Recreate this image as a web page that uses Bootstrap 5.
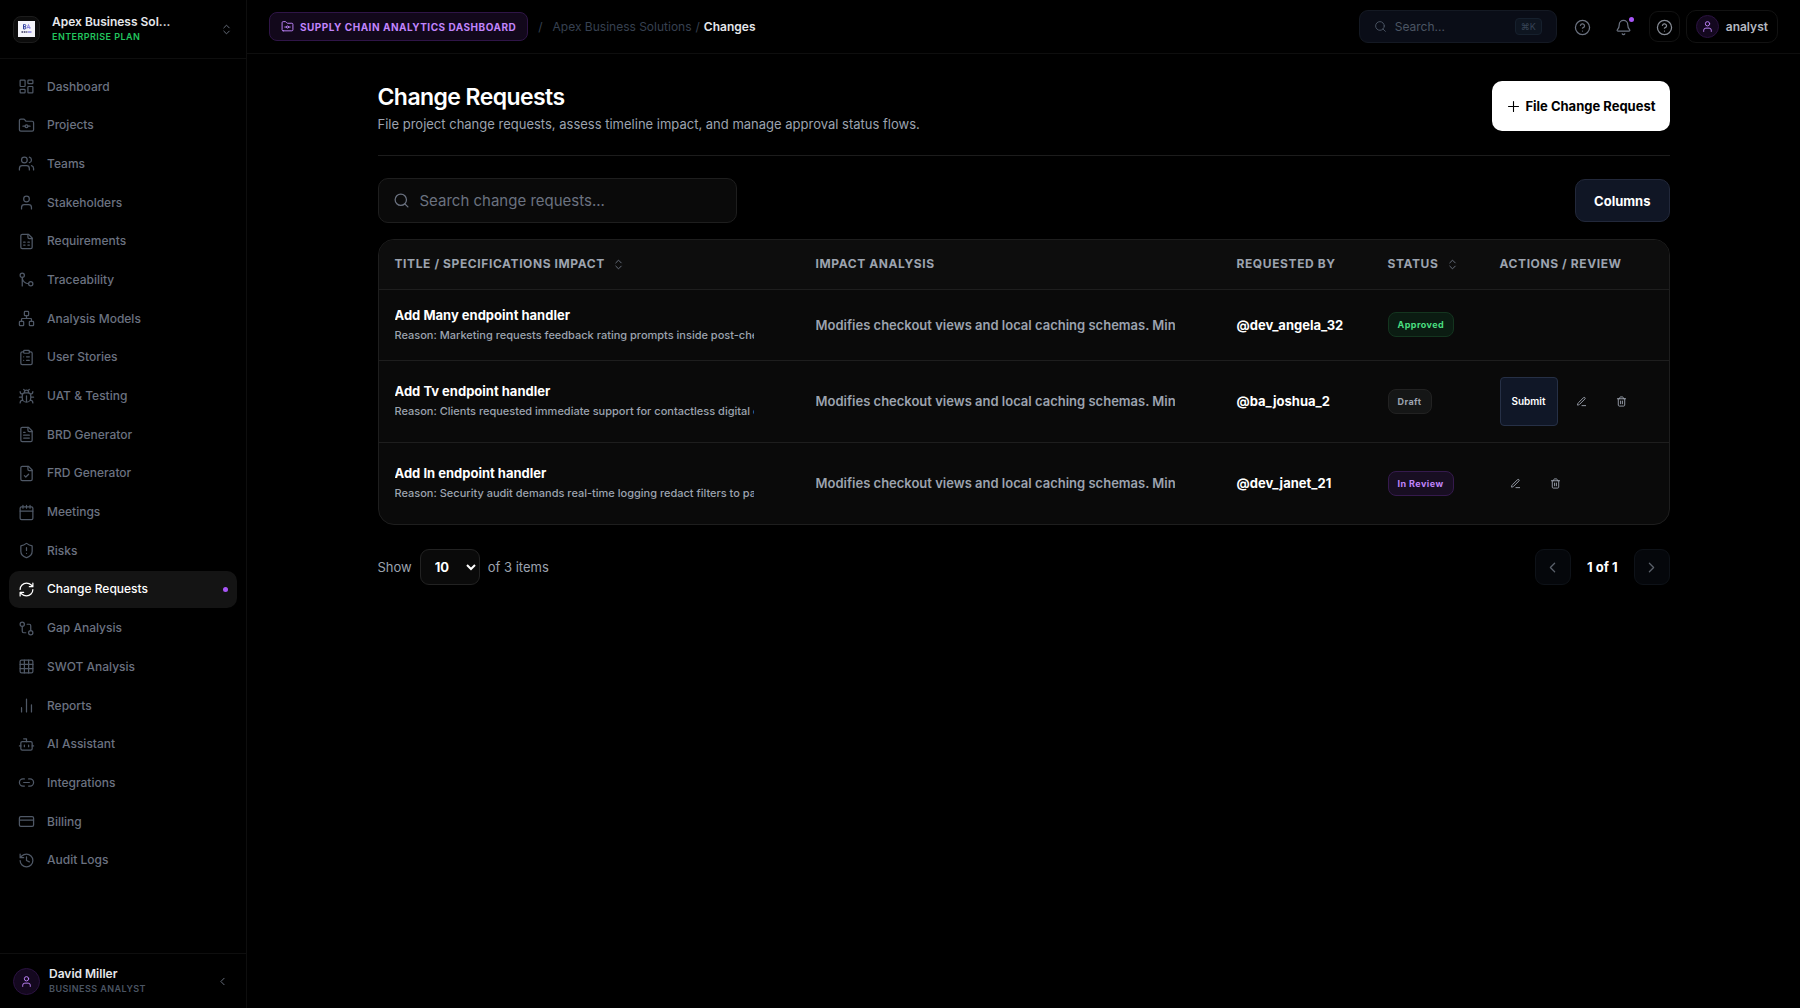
<!DOCTYPE html>
<html lang="en">
<head>
<meta charset="utf-8">
<meta name="viewport" content="width=device-width, initial-scale=1">
<title>Change Requests</title>
<link href="https://cdn.jsdelivr.net/npm/bootstrap@5.3.0/dist/css/bootstrap.min.css" rel="stylesheet">
<style>
  body { background: #000; color: #fff; font-family: Inter, "Liberation Sans", sans-serif; font-size: 13px; line-height: 20px; }
  button, input, select { font-family: inherit; }
  a { text-decoration: none; }
  .ico { fill: none; stroke: currentColor; stroke-width: 1.75; stroke-linecap: round; stroke-linejoin: round; flex: none; width: 17px; height: 17px; }
  .ico-sm { width: 13px; height: 13px; }
  .ico-md { width: 15px; height: 15px; }
  .ico-xs { width: 11px; height: 11px; stroke-width: 2; }

  /* Sidebar */
  .side { width: 247px; border-right: 1px solid #0e0e0e; }
  .side-top { height: 59px; padding: 0 13px; border-bottom: 1px solid #0e0e0e; }
  .brand-tile { width: 27px; height: 27px; border-radius: 8px; background: #0c0c0c; border: 1px solid #1c1c1c; }
  .tiny-caps { font-size: 9px; line-height: 14px; font-weight: 600; letter-spacing: .05em; text-transform: uppercase; }
  .c-green { color: #22c55e; }
  .c-dim { color: #4b5563; }
  .c-soft { color: #6b7280; }
  .c-muted { color: #9ca3af; }
  .name-line { font-size: 12px; line-height: 16px; font-weight: 600; color: #e5e7eb; }
  .menu { padding: 9px 9px 74px; }
  .menu a { display: flex; align-items: center; gap: 12px; height: 37px; padding: 0 9px; border-radius: 10px; font-size: 12px; font-weight: 500; color: #6b7280; }
  .menu a .ico { color: #4f5866; }
  .menu a.active, .menu a.active .ico { color: #fff; }
  .menu a.active { background: #141414; }
  .menu-dot { width: 5px; height: 5px; border-radius: 50%; background: #a855f7; }
  .side-user { height: 55px; padding: 0 13px; border-top: 1px solid #0e0e0e; gap: 9px; }
  .ava { width: 27px; height: 27px; border-radius: 50%; background: #14081f; border: 1px solid #2a1240; color: #c084fc; }
  .ava-sm { width: 23px; height: 23px; }

  /* Top bar */
  .top { height: 54px; padding: 0 22px; border-bottom: 1px solid #0e0e0e; }
  .proj { height: 29px; padding: 0 11px; gap: 6px; border-radius: 8px; border: 1px solid #2f1547; background: #12081b; color: #c084fc; font-size: 10px; font-weight: 700; letter-spacing: .05em; }
  .crumb-text { font-size: 12px; color: #374151; }
  .crumb-text .first-sep { margin: 0 10px; }
  .crumb-text .now { color: #e5e7eb; font-weight: 600; }
  .top-tools { gap: 6px; }
  .quick { width: 198px; height: 33px; padding: 0 14px; border-radius: 9px; background: #0a0d17; border: 1px solid #141923; color: #4b5563; }
  .quick input { font-size: 12px; color: inherit; }
  .quick input::placeholder { color: #4b5563; opacity: 1; }
  .keycap { font-size: 9px; line-height: 15px; padding: 0 5px; border-radius: 4px; border: 1px solid #16202d; background: #0e1520; color: #364355; }
  .iconbtn { width: 31px; height: 31px; margin-left: 4px; border: 1px solid transparent; border-radius: 9px; background: none; color: #6b7280; padding: 0; }
  .ringed { border-color: #121212; color: #868b95; }
  .bell-dot { width: 5px; height: 5px; border-radius: 50%; background: #a855f7; top: 5px; right: 4px; }
  .who { height: 33px; padding: 0 9px; border: 1px solid #121212; border-radius: 10px; background: none; color: #b4b8c0; font-size: 12px; font-weight: 600; gap: 7px; }

  /* Content */
  .content { max-width: 1340px; padding: 27px 24px; }
  .head { padding-bottom: 20px; border-bottom: 1px solid #1c1c1c; }
  .head h1 { font-size: 23px; line-height: 32px; font-weight: 600; letter-spacing: -.025em; }
  .head p { font-size: 13px; line-height: 22px; }
  .file-btn { height: 50px; padding: 0 14px; border: 0; border-radius: 10px; background: #fff; color: #000; font-size: 13px; font-weight: 700; gap: 4px; }
  .tools { margin: 22px 0 16px; }
  .find { width: 359px; height: 45px; padding: 0 14px; border: 1px solid #1e1e1e; border-radius: 10px; background: #0a0a0a; color: #6b7280; gap: 10px; }
  .find input { font-size: 15px; color: #fff; }
  .find input::placeholder { color: #6b7280; opacity: 1; }
  .bare { background: none; border: 0; outline: 0; padding: 0; min-width: 0; flex: 1; }
  .cols-btn { height: 43px; padding: 0 18px; border: 1px solid #22283a; border-radius: 10px; background: #101625; color: #fff; font-size: 13px; font-weight: 700; }

  .grid-box { border: 1px solid #1e1e1e; border-radius: 16px; background: #0a0a0a; overflow: hidden; }
  .grid-box table { width: 100%; table-layout: fixed; border-collapse: collapse; }
  .grid-box th { height: 49px; padding: 0 16px; background: #0d0d0d; color: #9ca3af; font-size: 12px; font-weight: 700; letter-spacing: .05em; white-space: nowrap; }
  .grid-box td { padding: 16px; vertical-align: middle; border-top: 1px solid #1e1e1e; }
  .clip { width: 359px; max-width: 100%; overflow: hidden; white-space: nowrap; }
  .t-main { font-size: 13px; line-height: 18px; font-weight: 700; color: #fff; }
  .t-sub { margin-top: 3px; font-size: 11px; line-height: 17px; font-weight: 500; color: #9ca3af; }
  .t-impact { font-weight: 600; color: #9ca3af; }
  .pill { display: inline-block; padding: 3px 9px; border: 1px solid; border-radius: 8px; font-size: 9px; line-height: 17px; font-weight: 700; letter-spacing: .05em; }
  .pill-ok { color: #4ade80; background: #0b1c12; border-color: #14351f; }
  .pill-draft { color: #9ca3af; background: #151616; border-color: #222; }
  .pill-rev { color: #c084fc; background: #180e22; border-color: #351a4d; }
  .submit-btn { width: 58px; height: 49px; padding: 0; border: 1px solid #263046; border-radius: 4px; background: #101727; color: #fff; font-size: 10px; font-weight: 600; }
  .act { width: 32px; height: 49px; padding: 0; border: 0; background: none; color: #9ca3af; }

  .pager { margin-top: 24px; }
  .pick { width: 60px; height: 36px; padding: 0 0 0 10px; border: 1px solid #222; border-radius: 9px; background: #0a0a0a; color: #fff; font-size: 13px; font-weight: 700; }
  .step { width: 36px; height: 36px; padding: 0; border: 1px solid #0e1218; border-radius: 9px; background: #05070b; color: #5b616b; }
</style>
</head>
<body>
<svg width="0" height="0" class="position-absolute" aria-hidden="true">
  <symbol id="dash" viewBox="0 0 24 24"><rect x="3" y="3" width="7" height="9" rx="1"/><rect x="14" y="3" width="7" height="5" rx="1"/><rect x="14" y="12" width="7" height="9" rx="1"/><rect x="3" y="16" width="7" height="5" rx="1"/></symbol>
  <symbol id="folder" viewBox="0 0 24 24"><path d="M4 20h16a2 2 0 0 0 2-2V8a2 2 0 0 0-2-2h-7.93a2 2 0 0 1-1.66-.9l-.82-1.2A2 2 0 0 0 7.93 3H4a2 2 0 0 0-2 2v13c0 1.1.9 2 2 2Z"/><circle cx="12" cy="13" r="2"/><path d="M14 13h3M7 13h3"/></symbol>
  <symbol id="users" viewBox="0 0 24 24"><path d="M16 21v-2a4 4 0 0 0-4-4H6a4 4 0 0 0-4 4v2"/><circle cx="9" cy="7" r="4"/><path d="M22 21v-2a4 4 0 0 0-3-3.87M16 3.13a4 4 0 0 1 0 7.75"/></symbol>
  <symbol id="user" viewBox="0 0 24 24"><path d="M19 21v-2a4 4 0 0 0-4-4H9a4 4 0 0 0-4 4v2"/><circle cx="12" cy="7" r="4"/></symbol>
  <symbol id="sheet" viewBox="0 0 24 24"><path d="M15 2H6a2 2 0 0 0-2 2v16a2 2 0 0 0 2 2h12a2 2 0 0 0 2-2V7Z"/><path d="M14 2v4a2 2 0 0 0 2 2h4M8 13h2M14 13h2M8 17h2M14 17h2"/></symbol>
  <symbol id="merge" viewBox="0 0 24 24"><circle cx="18" cy="18" r="3"/><circle cx="6" cy="6" r="3"/><path d="M6 21V9a9 9 0 0 0 9 9"/></symbol>
  <symbol id="net" viewBox="0 0 24 24"><rect x="16" y="16" width="6" height="6" rx="1"/><rect x="2" y="16" width="6" height="6" rx="1"/><rect x="9" y="2" width="6" height="6" rx="1"/><path d="M5 16v-3a1 1 0 0 1 1-1h12a1 1 0 0 1 1 1v3M12 12V8"/></symbol>
  <symbol id="clipb" viewBox="0 0 24 24"><rect x="8" y="2" width="8" height="4" rx="1"/><path d="M16 4h2a2 2 0 0 1 2 2v14a2 2 0 0 1-2 2H6a2 2 0 0 1-2-2V6a2 2 0 0 1 2-2h2M12 11h4M12 16h4M8 11h.01M8 16h.01"/></symbol>
  <symbol id="bug" viewBox="0 0 24 24"><path d="m8 2 1.88 1.88M14.12 3.88 16 2M9 7.13v-1a3.003 3.003 0 1 1 6 0v1M12 20c-3.3 0-6-2.7-6-6v-3a4 4 0 0 1 4-4h4a4 4 0 0 1 4 4v3c0 3.3-2.7 6-6 6M12 20v-9M6.53 9C4.6 8.8 3 7.1 3 5M6 13H2M3 21c0-2.1 1.7-3.9 3.8-4M20.97 5c0 2.1-1.6 3.8-3.5 4M22 13h-4M17.2 17c2.1.1 3.8 1.9 3.8 4"/></symbol>
  <symbol id="ftext" viewBox="0 0 24 24"><path d="M15 2H6a2 2 0 0 0-2 2v16a2 2 0 0 0 2 2h12a2 2 0 0 0 2-2V7Z"/><path d="M14 2v4a2 2 0 0 0 2 2h4M10 9H8M16 13H8M16 17H8"/></symbol>
  <symbol id="fcheck" viewBox="0 0 24 24"><path d="M15 2H6a2 2 0 0 0-2 2v16a2 2 0 0 0 2 2h12a2 2 0 0 0 2-2V7Z"/><path d="M14 2v4a2 2 0 0 0 2 2h4M9 15l2 2 4-4"/></symbol>
  <symbol id="cal" viewBox="0 0 24 24"><rect x="3" y="4" width="18" height="18" rx="2"/><path d="M7 2v4M12 2v4M17 2v4M3 10h18"/></symbol>
  <symbol id="shield" viewBox="0 0 24 24"><path d="M20 13c0 5-3.5 7.5-7.66 8.95a1 1 0 0 1-.67-.01C7.5 20.5 4 18 4 13V6a1 1 0 0 1 1-1c2 0 4.5-1.2 6.24-2.72a1.17 1.17 0 0 1 1.52 0C14.51 3.81 17 5 19 5a1 1 0 0 1 1 1zM12 8v4M12 16h.01"/></symbol>
  <symbol id="cycle" viewBox="0 0 24 24"><path d="M3 12a9 9 0 0 1 9-9 9.75 9.75 0 0 1 6.74 2.74L21 8M21 3v5h-5M21 12a9 9 0 0 1-9 9 9.75 9.75 0 0 1-6.74-2.74L3 16M8 16H3v5"/></symbol>
  <symbol id="gap" viewBox="0 0 24 24"><circle cx="18" cy="18" r="3"/><circle cx="6" cy="6" r="3"/><path d="M13 6h3a2 2 0 0 1 2 2v7M11 18H8a2 2 0 0 1-2-2V9"/></symbol>
  <symbol id="grid9" viewBox="0 0 24 24"><rect x="3" y="3" width="18" height="18" rx="2"/><path d="M3 9h18M3 15h18M9 3v18M15 3v18"/></symbol>
  <symbol id="bars" viewBox="0 0 24 24"><path d="M19 21V11M12 21V3M5 21v-6"/></symbol>
  <symbol id="bot" viewBox="0 0 24 24"><path d="M12 8V4H8"/><rect x="4" y="8" width="16" height="12" rx="2"/><path d="M2 14h2M20 14h2M15 13v2M9 13v2"/></symbol>
  <symbol id="chain" viewBox="0 0 24 24"><path d="M9 17H7A5 5 0 0 1 7 7h2M15 7h2a5 5 0 1 1 0 10h-2M8 12h8"/></symbol>
  <symbol id="pay" viewBox="0 0 24 24"><rect x="2" y="5" width="20" height="14" rx="2"/><path d="M2 10h20"/></symbol>
  <symbol id="hist" viewBox="0 0 24 24"><path d="M3 12a9 9 0 1 0 9-9 9.75 9.75 0 0 0-6.74 2.74L3 8M3 3v5h5M12 7v5l4 2"/></symbol>
  <symbol id="updown" viewBox="0 0 24 24"><path d="m7 15 5 5 5-5M7 9l5-5 5 5"/></symbol>
  <symbol id="left" viewBox="0 0 24 24"><path d="m15 18-6-6 6-6"/></symbol>
  <symbol id="right" viewBox="0 0 24 24"><path d="m9 18 6-6-6-6"/></symbol>
  <symbol id="lens" viewBox="0 0 24 24"><circle cx="11" cy="11" r="8"/><path d="m21 21-4.3-4.3"/></symbol>
  <symbol id="help" viewBox="0 0 24 24"><circle cx="12" cy="12" r="10"/><path d="M9.09 9a3 3 0 0 1 5.83 1c0 2-3 3-3 3M12 17h.01"/></symbol>
  <symbol id="bell" viewBox="0 0 24 24"><path d="M10.268 21a2 2 0 0 0 3.464 0M3.262 15.326A1 1 0 0 0 4 17h16a1 1 0 0 0 .74-1.673C19.41 13.956 18 12.499 18 8A6 6 0 0 0 6 8c0 4.499-1.411 5.956-2.738 7.326"/></symbol>
  <symbol id="plus" viewBox="0 0 24 24"><path d="M4 12h16M12 4v16"/></symbol>
  <symbol id="pen" viewBox="0 0 24 24"><path d="M13 21h8M16.376 3.622a1 1 0 0 1 3.002 3.002L7.368 18.635a2 2 0 0 1-.855.506l-2.872.838a.5.5 0 0 1-.62-.62l.838-2.872a2 2 0 0 1 .506-.854z"/></symbol>
  <symbol id="bin" viewBox="0 0 24 24"><path d="M3 6h18M19 6v14c0 1-1 2-2 2H7c-1 0-2-1-2-2V6M8 6V4c0-1 1-2 2-2h4c1 0 2 1 2 2v2M10 11v6M14 11v6"/></symbol>
</svg>

<div class="d-flex min-vh-100">
  <aside class="side d-flex flex-column flex-shrink-0">
    <div class="side-top d-flex align-items-center">
      <div class="brand-tile d-flex align-items-center justify-content-center">
        <svg width="17" height="16" viewBox="0 0 17 16" aria-hidden="true"><rect width="17" height="16" fill="#f4f4fa"/><path d="M5.500 3.500v4.500h1.500a1.200 1.200 0 0 0 0-2.300h-1.500M5.500 3.500h1.200a1.100 1.100 0 0 1 0 2.200" fill="none" stroke="#2f3f9e" stroke-width="1"/><path d="M9 7.500l1.500-4 1.500 4.500M9 6.500h3.500" fill="none" stroke="#8a84e0" stroke-width="1"/><path d="M3.500 11h1.800M6 11h1.500M8.200 11h1.200" stroke="#33335c" stroke-width="1.500"/><path d="M10 11h3.500" stroke="#8a84e0" stroke-width="1.500"/></svg>
      </div>
      <div class="ms-2 ps-1 flex-fill">
        <div class="name-line">Apex Business Sol...</div>
        <div class="tiny-caps c-green">Enterprise Plan</div>
      </div>
      <svg class="ico ico-sm c-soft"><use href="#updown"/></svg>
    </div>
    <nav class="menu flex-fill d-flex flex-column justify-content-between" aria-label="Main">
      <a href="#"><svg class="ico"><use href="#dash"/></svg>Dashboard</a>
      <a href="#"><svg class="ico"><use href="#folder"/></svg>Projects</a>
      <a href="#"><svg class="ico"><use href="#users"/></svg>Teams</a>
      <a href="#"><svg class="ico"><use href="#user"/></svg>Stakeholders</a>
      <a href="#"><svg class="ico"><use href="#sheet"/></svg>Requirements</a>
      <a href="#"><svg class="ico"><use href="#merge"/></svg>Traceability</a>
      <a href="#"><svg class="ico"><use href="#net"/></svg>Analysis Models</a>
      <a href="#"><svg class="ico"><use href="#clipb"/></svg>User Stories</a>
      <a href="#"><svg class="ico"><use href="#bug"/></svg>UAT &amp; Testing</a>
      <a href="#"><svg class="ico"><use href="#ftext"/></svg>BRD Generator</a>
      <a href="#"><svg class="ico"><use href="#fcheck"/></svg>FRD Generator</a>
      <a href="#"><svg class="ico"><use href="#cal"/></svg>Meetings</a>
      <a href="#"><svg class="ico"><use href="#shield"/></svg>Risks</a>
      <a href="#" class="active" aria-current="page"><svg class="ico"><use href="#cycle"/></svg>Change Requests<span class="menu-dot ms-auto"></span></a>
      <a href="#"><svg class="ico"><use href="#gap"/></svg>Gap Analysis</a>
      <a href="#"><svg class="ico"><use href="#grid9"/></svg>SWOT Analysis</a>
      <a href="#"><svg class="ico"><use href="#bars"/></svg>Reports</a>
      <a href="#"><svg class="ico"><use href="#bot"/></svg>AI Assistant</a>
      <a href="#"><svg class="ico"><use href="#chain"/></svg>Integrations</a>
      <a href="#"><svg class="ico"><use href="#pay"/></svg>Billing</a>
      <a href="#"><svg class="ico"><use href="#hist"/></svg>Audit Logs</a>
    </nav>
    <div class="side-user d-flex align-items-center">
      <div class="ava d-flex align-items-center justify-content-center"><svg class="ico ico-sm"><use href="#user"/></svg></div>
      <div class="flex-fill">
        <div class="name-line">David Miller</div>
        <div class="tiny-caps c-dim">Business Analyst</div>
      </div>
      <svg class="ico ico-sm c-soft me-1"><use href="#left"/></svg>
    </div>
  </aside>

  <div class="flex-fill d-flex flex-column">
    <header class="top d-flex align-items-center">
      <button type="button" class="proj d-flex align-items-center"><svg class="ico ico-sm"><use href="#folder"/></svg>SUPPLY CHAIN ANALYTICS DASHBOARD</button>
      <nav class="crumb-text d-flex align-items-center" aria-label="Breadcrumb">
        <span class="first-sep">/</span>
        <a href="#" class="text-reset">Apex Business Solutions</a>
        <span class="mx-1">/</span>
        <span class="now">Changes</span>
      </nav>
      <div class="top-tools ms-auto d-flex align-items-center">
        <label class="quick d-flex align-items-center gap-2">
          <svg class="ico ico-sm"><use href="#lens"/></svg>
          <input class="bare" type="search" placeholder="Search..." aria-label="Search">
          <span class="keycap">⌘K</span>
        </label>
        <button type="button" class="iconbtn" aria-label="Help"><svg class="ico"><use href="#help"/></svg></button>
        <button type="button" class="iconbtn position-relative" aria-label="Notifications"><svg class="ico"><use href="#bell"/></svg><span class="bell-dot position-absolute"></span></button>
        <button type="button" class="iconbtn ringed" aria-label="Guide"><svg class="ico"><use href="#help"/></svg></button>
        <button type="button" class="who d-flex align-items-center"><span class="ava ava-sm d-flex align-items-center justify-content-center"><svg class="ico ico-sm"><use href="#user"/></svg></span>analyst</button>
      </div>
    </header>

    <main class="content w-100 mx-auto">
      <div class="head d-flex justify-content-between align-items-start">
        <div>
          <h1 class="mb-0">Change Requests</h1>
          <p class="mb-0 c-muted">File project change requests, assess timeline impact, and manage approval status flows.</p>
        </div>
        <button type="button" class="file-btn d-flex align-items-center"><svg class="ico ico-md"><use href="#plus"/></svg>File Change Request</button>
      </div>

      <div class="tools d-flex justify-content-between align-items-center">
        <label class="find d-flex align-items-center">
          <svg class="ico"><use href="#lens"/></svg>
          <input class="bare" type="search" placeholder="Search change requests..." aria-label="Search change requests">
        </label>
        <button type="button" class="cols-btn">Columns</button>
      </div>

      <div class="grid-box">
        <table>
          <colgroup><col><col><col style="width:151px"><col style="width:112px"><col style="width:185px"></colgroup>
          <thead>
            <tr>
              <th scope="col">TITLE / SPECIFICATIONS IMPACT <svg class="ico ico-sm c-soft ms-1"><use href="#updown"/></svg></th>
              <th scope="col">IMPACT ANALYSIS</th>
              <th scope="col">REQUESTED BY</th>
              <th scope="col">STATUS <svg class="ico ico-sm c-soft ms-1"><use href="#updown"/></svg></th>
              <th scope="col">ACTIONS / REVIEW</th>
            </tr>
          </thead>
          <tbody>
            <tr>
              <td><div class="clip t-main">Add Many endpoint handler</div><div class="clip t-sub">Reason: Marketing requests feedback rating prompts inside post-checkout</div></td>
              <td><div class="clip t-impact">Modifies checkout views and local caching schemas. Minor</div></td>
              <td class="t-main">@dev_angela_32</td>
              <td><span class="pill pill-ok">Approved</span></td>
              <td></td>
            </tr>
            <tr>
              <td><div class="clip t-main">Add Tv endpoint handler</div><div class="clip t-sub">Reason: Clients requested immediate support for contactless digital card</div></td>
              <td><div class="clip t-impact">Modifies checkout views and local caching schemas. Minor</div></td>
              <td class="t-main">@ba_joshua_2</td>
              <td><span class="pill pill-draft">Draft</span></td>
              <td>
                <div class="d-flex gap-2">
                  <button type="button" class="submit-btn">Submit</button>
                  <button type="button" class="act" aria-label="Edit"><svg class="ico ico-xs d-block mx-auto"><use href="#pen"/></svg></button>
                  <button type="button" class="act" aria-label="Delete"><svg class="ico ico-xs d-block mx-auto"><use href="#bin"/></svg></button>
                </div>
              </td>
            </tr>
            <tr>
              <td><div class="clip t-main">Add In endpoint handler</div><div class="clip t-sub">Reason: Security audit demands real-time logging redact filters to pass</div></td>
              <td><div class="clip t-impact">Modifies checkout views and local caching schemas. Minor</div></td>
              <td class="t-main">@dev_janet_21</td>
              <td><span class="pill pill-rev">In Review</span></td>
              <td>
                <div class="d-flex gap-2">
                  <button type="button" class="act" aria-label="Edit"><svg class="ico ico-xs d-block mx-auto"><use href="#pen"/></svg></button>
                  <button type="button" class="act" aria-label="Delete"><svg class="ico ico-xs d-block mx-auto"><use href="#bin"/></svg></button>
                </div>
              </td>
            </tr>
          </tbody>
        </table>
      </div>

      <div class="pager d-flex justify-content-between align-items-center">
        <div class="d-flex align-items-center gap-2 c-muted">
          <label for="size">Show</label>
          <select id="size" class="pick"><option>10</option><option>25</option><option>50</option></select>
          <span>of 3 items</span>
        </div>
        <div class="d-flex align-items-center gap-3">
          <button type="button" class="step" aria-label="Previous page"><svg class="ico"><use href="#left"/></svg></button>
          <span class="t-main">1 of 1</span>
          <button type="button" class="step" aria-label="Next page"><svg class="ico"><use href="#right"/></svg></button>
        </div>
      </div>
    </main>
  </div>
</div>
<script src="https://cdn.jsdelivr.net/npm/bootstrap@5.3.0/dist/js/bootstrap.bundle.min.js"></script>
</body>
</html>
